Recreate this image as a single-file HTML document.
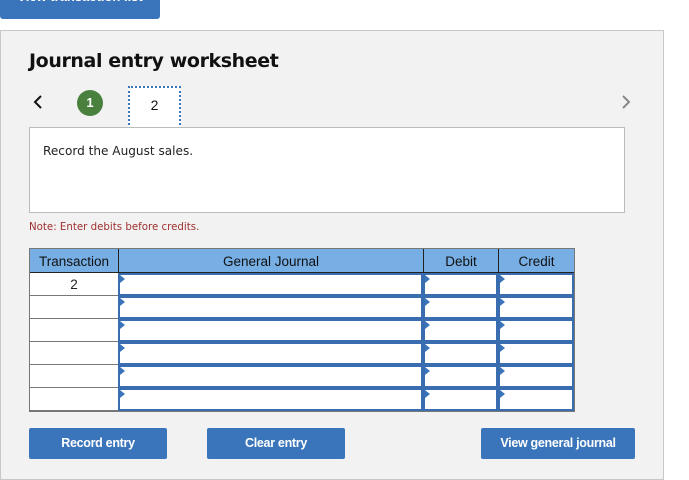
<!DOCTYPE html><html><head><style>
*{margin:0;padding:0;box-sizing:border-box}
body{width:689px;height:471px;background:#fff;font-family:"Liberation Sans",Arial,sans-serif;position:relative;overflow:hidden}
.a{position:absolute}
.btn{position:absolute;background:#3a75bb;color:#fff;font-weight:bold;font-size:12.5px;text-align:center;line-height:31px;border-radius:2px;letter-spacing:-0.3px}
.tri{position:absolute;left:0;top:0;width:0;height:0;border-top:4px solid transparent;border-bottom:4px solid transparent;border-left:5px solid #3a75bb}
.cell{position:absolute;background:#fff;border:2px solid #3a6db0}
.hd{position:absolute;top:254px;text-align:center;font-size:13.5px;color:#111}
</style></head><body>
<div class="a" style="left:0;top:0;width:160px;height:19px;background:#3a75bb;border-radius:0 0 3px 3px;overflow:hidden"><div style="position:absolute;left:0;width:160px;top:-11px;color:#fff;font-size:13px;font-weight:bold;text-align:center">View transaction list</div></div>
<div class="a" style="left:0;top:30px;width:664px;height:450px;background:#f2f2f2;border:1px solid #c8c8c8"></div>
<div class="a" style="left:29px;top:50px;font-size:19px;font-weight:bold;font-family:'DejaVu Sans',sans-serif;letter-spacing:-0.4px;color:#111">Journal entry worksheet</div>
<svg class="a" style="left:32px;top:94px" width="12" height="16"><path d="M9 2 L3 8 L9 14" stroke="#111" stroke-width="2" fill="none"/></svg>
<div class="a" style="left:77px;top:90px;width:26px;height:26px;border-radius:50%;background:#4a803e;color:#fff;font-size:13px;font-weight:bold;text-align:center;line-height:26px">1</div>
<div class="a" style="left:128px;top:86px;width:53px;height:43px;background:#fff;border:2px dotted #3a75bb;text-align:center;line-height:34px;font-size:14px;color:#111">2</div>
<svg class="a" style="left:620px;top:94px" width="12" height="16"><path d="M3 2 L9 8 L3 14" stroke="#888" stroke-width="2" fill="none"/></svg>
<div class="a" style="left:29px;top:127px;width:596px;height:86px;background:#fff;border:1px solid #bbb"></div>
<div class="a" style="left:43px;top:144px;font-size:13px;color:#222;font-family:'DejaVu Sans',sans-serif;transform:scale(0.93);transform-origin:left">Record the August sales.</div>
<div class="a" style="left:29px;top:220px;font-size:11px;color:#a03030;font-family:'DejaVu Sans',sans-serif;transform:scale(0.93);transform-origin:left">Note: Enter debits before credits.</div>
<div class="a" style="left:29px;top:248px;width:546px;height:164px;background:#777"></div>
<div class="a" style="left:30px;top:249px;width:544px;height:23px;background:#77aee4"></div>
<div class="a" style="left:118px;top:249px;width:1px;height:23px;background:#222"></div>
<div class="a" style="left:423px;top:249px;width:1px;height:23px;background:#222"></div>
<div class="a" style="left:498px;top:249px;width:1px;height:23px;background:#222"></div>
<div class="a" style="left:30px;top:272px;width:544px;height:1px;background:#222"></div>
<div class="hd" style="left:30px;width:88px">Transaction</div>
<div class="hd" style="left:119px;width:304px">General Journal</div>
<div class="hd" style="left:424px;width:74px">Debit</div>
<div class="hd" style="left:499px;width:75px">Credit</div>
<div id="rows"></div>
<script>
var h='';for(var i=0;i<6;i++){var y=273+i*23;
h+='<div class="a" style="left:30px;top:'+y+'px;width:88px;height:22px;background:#fff;text-align:center;font-size:13.5px;line-height:24px;color:#222">'+(i==0?'2':'')+'</div>';
[[118,305],[423,75],[498,76]].forEach(function(c){h+='<div class="cell" style="left:'+c[0]+'px;top:'+y+'px;width:'+c[1]+'px;height:23px"><div class="tri"></div></div>';});}
document.getElementById('rows').innerHTML=h;
</script>
<div class="btn" style="left:29px;top:428px;width:138px">Record entry</div>
<div class="btn" style="left:207px;top:428px;width:138px">Clear entry</div>
<div class="btn" style="left:481px;top:428px;width:154px">View general journal</div>
</body></html>
